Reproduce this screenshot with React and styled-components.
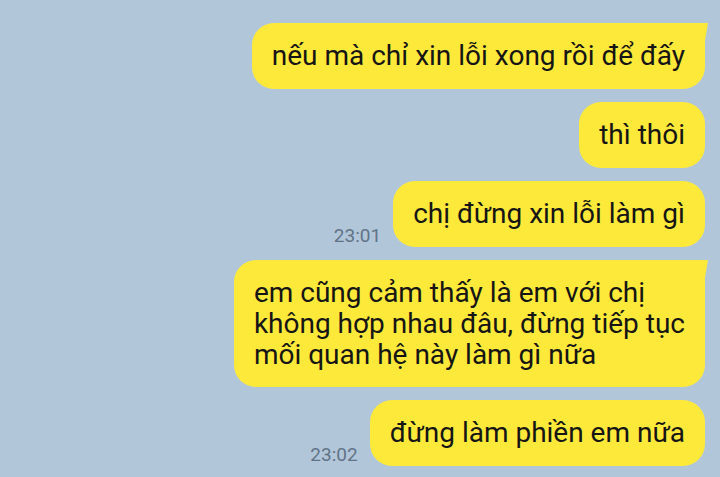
import React from 'react';
import styled, { createGlobalStyle } from 'styled-components';

const GlobalStyle = createGlobalStyle`
  html, body {
    margin: 0;
    padding: 0;
    background: #b2c6da;
    overflow: hidden;
  }
`;

const ChatWrapper = styled.div`
  width: 720px;
  height: 477px;
  overflow: hidden;
  box-sizing: border-box;
  padding: 23px 15px 0 0;
  display: flex;
  flex-direction: column;
  align-items: flex-end;
  gap: 13px;
  background: #b2c6da;
  font-family: Roboto, "Noto Sans", sans-serif;
`;

const Row = styled.div`
  display: flex;
  flex-direction: row;
  align-items: flex-end;
  justify-content: flex-end;
  gap: 12px;
`;

const Time = styled.span`
  font-size: 19px;
  line-height: 19px;
  color: #617487;
  margin-bottom: 2px;
`;

const Bubble = styled.div`
  position: relative;
  box-sizing: border-box;
  min-width: ${({ $width }) => ($width ? `${$width}px` : '0')};
  min-height: 66px;
  background: #fde93a;
  color: #151515;
  font-size: 28px;
  line-height: 31px;
  padding: 17px 20px 17px 20px;
  border-radius: 22px;
  ${({ $tail }) => $tail && `
    border-top-right-radius: 6px;
    &::after {
      content: '';
      position: absolute;
      top: 0;
      right: -3px;
      width: 18px;
      height: 18px;
      background: #fde93a;
      clip-path: polygon(0 0, 100% 0, 83% 100%);
    }
  `}
`;

const messages = [
  { lines: ['nếu mà chỉ xin lỗi xong rồi để đấy'], tail: true },
  { lines: ['thì thôi'] },
  { lines: ['chị đừng xin lỗi làm gì'], time: '23:01' },
  {
    lines: [
      'em cũng cảm thấy là em với chị',
      'không hợp nhau đâu, đừng tiếp tục',
      'mối quan hệ này làm gì nữa',
    ],
    tail: true,
  },
  { lines: ['đừng làm phiền em nữa'], time: '23:02' },
  { lines: [], tail: true, width: 330 },
];

const App = () => (
  <>
    <GlobalStyle />
    <ChatWrapper>
      {messages.map((m, i) => (
        <Row key={i}>
          {m.time && <Time>{m.time}</Time>}
          <Bubble $tail={m.tail} $width={m.width}>
            {m.lines.map((l, j) => (
              <React.Fragment key={j}>
                {j > 0 && <br />}
                {l}
              </React.Fragment>
            ))}
          </Bubble>
        </Row>
      ))}
    </ChatWrapper>
  </>
);

export default App;
